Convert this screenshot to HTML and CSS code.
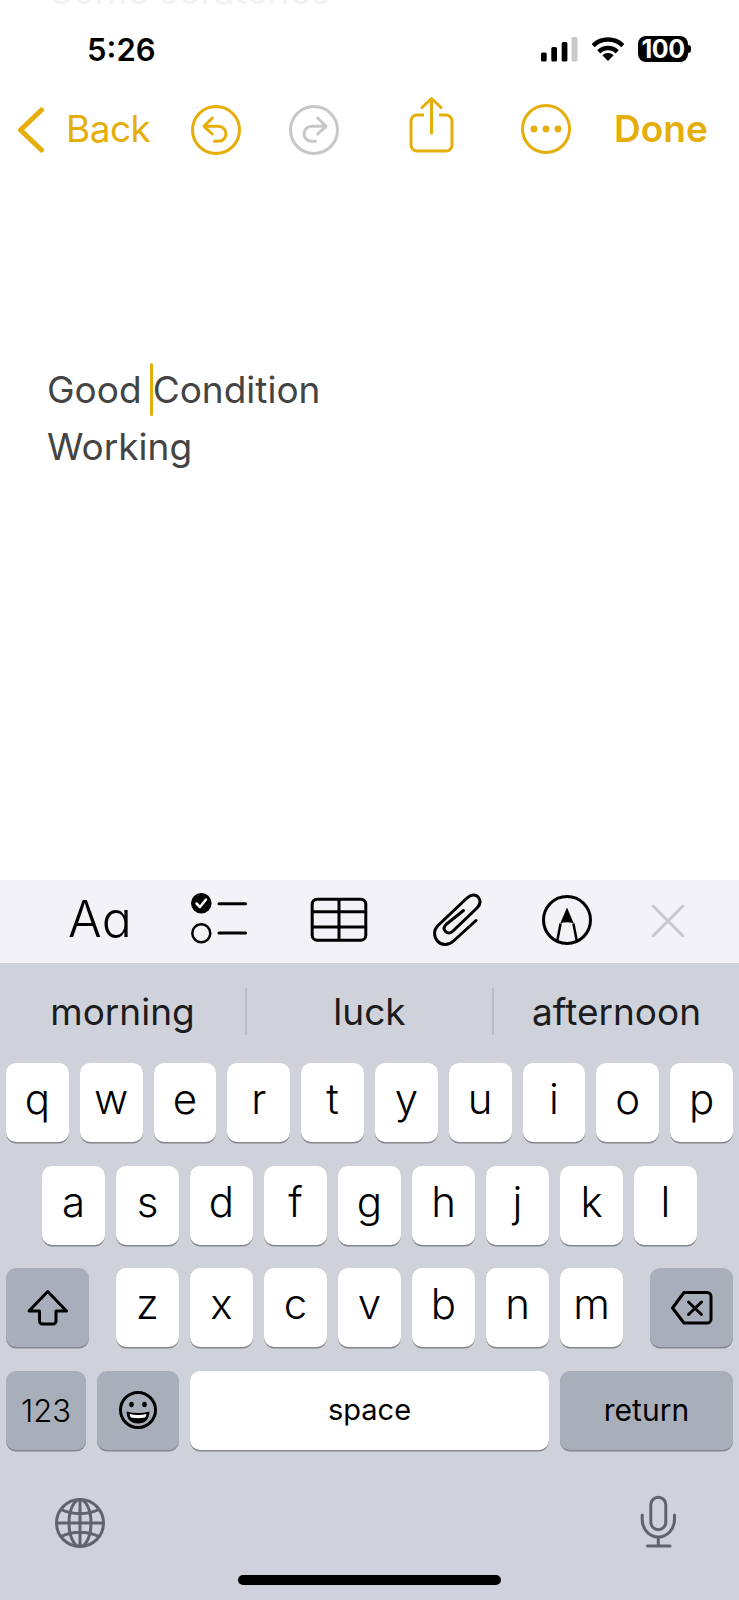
FILE: index.html
```html
<!DOCTYPE html>
<html lang="en">
<head>
    <meta charset="UTF-8">
    <meta name="viewport" content="width=device-width, initial-scale=1.0">
    <title>Note</title>
    <link rel="stylesheet" href="styles.css">
</head>
<body>
<div class="page">
    <div class="note-area">
        <p class="ghost-line">Some scratches</p>

        <div class="status-bar">
            <span class="time">5:26</span>
            <svg class="signal" width="37" height="25" viewBox="0 0 37 25">
                <rect x="0" y="15.5" width="5.7" height="9" rx="1.5" fill="#000"/>
                <rect x="10.3" y="10" width="5.7" height="14.5" rx="1.5" fill="#000"/>
                <rect x="20.7" y="5" width="5.7" height="19.5" rx="1.5" fill="#000"/>
                <rect x="30.5" y="0" width="6" height="24.5" rx="1.5" fill="#c9c9c9"/>
            </svg>
            <svg class="wifi" width="32" height="24" viewBox="0 0 32 24">
                <path d="M1.15 8.65A21 21 0 0 1 30.85 8.65M6.8 14.8A13 13 0 0 1 25.2 14.8" fill="none" stroke="#000" stroke-width="4.5"/>
                <path d="M16 24L10.34 18.34A8 8 0 0 1 21.66 18.34Z" fill="#000"/>
            </svg>
            <span class="battery">100</span>
        </div>

        <div class="nav-bar">
            <svg class="back-chevron" width="28" height="46" viewBox="0 0 28 46">
                <path d="M24.5 3L3.5 23L24.5 43" fill="none" stroke="#e6ae0a" stroke-width="5" stroke-linecap="round" stroke-linejoin="round"/>
            </svg>
            <span class="back-label">Back</span>
            <svg class="undo-icon" width="52" height="52" viewBox="0 0 52 52">
                <circle cx="26" cy="26" r="23.5" fill="none" stroke="#e6ae0a" stroke-width="3"/>
                <path d="M22.3 14L14 22.3L22.3 30M14 22.3H28.5A7.5 7.5 0 0 1 28.5 37.3H24.5" fill="none" stroke="#e6ae0a" stroke-width="3" stroke-linecap="round" stroke-linejoin="round"/>
            </svg>
            <svg class="redo-icon" width="52" height="52" viewBox="0 0 52 52">
                <circle cx="26" cy="26" r="23.5" fill="none" stroke="#c7c7c9" stroke-width="3"/>
                <path d="M29.7 14L38 22.3L29.7 30M38 22.3H23.5A7.5 7.5 0 0 0 23.5 37.3H27.5" fill="none" stroke="#c7c7c9" stroke-width="3" stroke-linecap="round" stroke-linejoin="round"/>
            </svg>
            <svg class="share-icon" width="47" height="58" viewBox="0 0 47 58">
                <path d="M16 19H9A6 6 0 0 0 3 25V49A6 6 0 0 0 9 55H38A6 6 0 0 0 44 49V25A6 6 0 0 0 38 19H31" fill="none" stroke="#e6ae0a" stroke-width="3"/>
                <path d="M23.5 37V3M14 11.5L23.5 2.5L33 11.5" fill="none" stroke="#e6ae0a" stroke-width="3" stroke-linecap="round" stroke-linejoin="round"/>
            </svg>
            <svg class="more-icon" width="52" height="52" viewBox="0 0 52 52">
                <circle cx="26" cy="26" r="23.5" fill="none" stroke="#e6ae0a" stroke-width="3"/>
                <circle cx="14" cy="26" r="3.4" fill="#e6ae0a"/>
                <circle cx="26" cy="26" r="3.4" fill="#e6ae0a"/>
                <circle cx="38" cy="26" r="3.4" fill="#e6ae0a"/>
            </svg>
            <span class="done-label">Done</span>
        </div>

        <div class="note-body">
            <p>Good<span class="caret"></span>Condition</p>
            <p>Working</p>
        </div>
    </div>

    <div class="format-bar">
        <span class="format-aa">Aɑ</span>
        <svg class="format-list" width="58" height="52" viewBox="0 0 58 52">
            <circle cx="11.3" cy="11.3" r="10.3" fill="#000"/>
            <path d="M6.5 11.5L10 15L16 7.5" fill="none" stroke="#fff" stroke-width="2.5" stroke-linecap="round" stroke-linejoin="round"/>
            <circle cx="11.3" cy="41.3" r="9" fill="none" stroke="#000" stroke-width="2.5"/>
            <path d="M29 11.7H55.5M29 41H55.5" stroke="#000" stroke-width="3" stroke-linecap="round"/>
        </svg>
        <svg class="format-table" width="60" height="48" viewBox="0 0 60 48">
            <rect x="3.2" y="3.2" width="53.6" height="41" rx="5" fill="none" stroke="#000" stroke-width="3"/>
            <path d="M3 15.7H57M3 31H57M30 3V44" stroke="#000" stroke-width="3"/>
        </svg>
        <svg class="format-clip" width="52" height="58" viewBox="0 0 52 58">
            <path d="M45 30.5L22.5 51C17 56 10 55.5 6.5 51C2.5 46.5 2.5 40 7 35.5L36 8C40 4 45 4 47.5 7.5C50 11 49 15 46 18L22 41C19.5 43.5 16.5 43.5 14.5 41.5C12.5 39.5 12.5 37 15 34.5L32.5 20.5" fill="none" stroke="#000" stroke-width="3" stroke-linecap="round" stroke-linejoin="round"/>
        </svg>
        <svg class="format-markup" width="52" height="52" viewBox="0 0 52 52">
            <circle cx="26" cy="26" r="23.5" fill="none" stroke="#000" stroke-width="3"/>
            <path d="M26 13.5L32.8 29.5Q26 27 19.2 29.5Z" fill="#000"/>
            <path d="M19.6 29.5L16 48M32.4 29.5L36 48" fill="none" stroke="#000" stroke-width="2.5"/>
        </svg>
        <svg class="format-close" width="34" height="34" viewBox="0 0 34 34">
            <path d="M2 2L32 32M32 2L2 32" stroke="#c7c7cc" stroke-width="2.8" stroke-linecap="round"/>
        </svg>
    </div>

    <div class="keyboard">
        <div class="suggestions">
            <span class="suggestion">morning</span>
            <span class="suggestion">luck</span>
            <span class="suggestion">afternoon</span>
        </div>

        <div class="key-row">
            <span class="key">q</span><span class="key">w</span><span class="key">e</span><span class="key">r</span><span class="key">t</span><span class="key">y</span><span class="key">u</span><span class="key">i</span><span class="key">o</span><span class="key">p</span>
        </div>
        <div class="key-row key-row-home">
            <span class="key">a</span><span class="key">s</span><span class="key">d</span><span class="key">f</span><span class="key">g</span><span class="key">h</span><span class="key">j</span><span class="key">k</span><span class="key">l</span>
        </div>
        <div class="key-row key-row-shift">
            <span class="key key-dark key-shift">
                <svg width="44" height="40" viewBox="0 0 44 40">
                    <path d="M21.7 3.5L3 23H13.5V33A3 3 0 0 0 16.5 36H27A3 3 0 0 0 30 33V23H40.5Z" fill="none" stroke="#000" stroke-width="3" stroke-linejoin="round"/>
                </svg>
            </span>
            <span class="key">z</span><span class="key">x</span><span class="key">c</span><span class="key">v</span><span class="key">b</span><span class="key">n</span><span class="key">m</span>
            <span class="key key-dark key-shift">
                <svg width="44" height="36" viewBox="0 0 44 36">
                    <path d="M14 2.5H37A4 4 0 0 1 41 6.5V29A4 4 0 0 1 37 33H14L2.5 18Z" fill="none" stroke="#000" stroke-width="3" stroke-linejoin="round"/>
                    <path d="M18.5 12L31.5 24.5M31.5 12L18.5 24.5" stroke="#000" stroke-width="3" stroke-linecap="round"/>
                </svg>
            </span>
        </div>
        <div class="key-row">
            <span class="key key-dark key-123">123</span>
            <span class="key key-dark key-emoji">
                <svg width="40" height="40" viewBox="0 0 40 40">
                    <circle cx="20" cy="20" r="17.5" fill="none" stroke="#000" stroke-width="3"/>
                    <ellipse cx="13.5" cy="14.5" rx="2.3" ry="2.8" fill="#000"/>
                    <ellipse cx="26.5" cy="14.5" rx="2.3" ry="2.8" fill="#000"/>
                    <path d="M8.5 21.5Q20 24.5 31.5 21.5Q31 33.5 20 33.5Q9 33.5 8.5 21.5Z" fill="#000"/>
                    <path d="M11.5 24Q20 26 28.5 24Q28 27 27 27.5Q20 29 13 27.5Q12 27 11.5 24Z" fill="#fff"/>
                </svg>
            </span>
            <span class="key key-space">space</span>
            <span class="key key-dark key-return">return</span>
        </div>

        <div class="keyboard-bottom">
            <svg width="52" height="52" viewBox="0 0 52 52">
                <circle cx="26" cy="26" r="23.5" fill="none" stroke="#5f636c" stroke-width="3"/>
                <ellipse cx="26" cy="26" rx="11" ry="23.5" fill="none" stroke="#5f636c" stroke-width="3"/>
                <path d="M26 2.5V49.5M2.5 26H49.5M7 12.5Q26 21 45 12.5M7 39.5Q26 31 45 39.5" fill="none" stroke="#5f636c" stroke-width="3"/>
            </svg>
            <svg class="mic-icon" width="42" height="56" viewBox="0 0 42 56">
                <rect x="12.8" y="4.2" width="15" height="32.5" rx="7.5" fill="none" stroke="#5f636c" stroke-width="3"/>
                <path d="M4.2 22V26C4.2 36 11 44 20.3 44C29.5 44 36.5 36 36.5 26V22M20.3 44V53M9.5 53H32" fill="none" stroke="#5f636c" stroke-width="3" stroke-linecap="round"/>
            </svg>
        </div>
        <div class="home-bar"></div>
    </div>
</div>
</body>
</html>
```

FILE: styles.css
```css
:root {
    --gold: #e6ae0a;
    --kb-bg: #cfd2da;
    --key-dark: #a9afba;
}

body {
    margin: 0;
    font-family: Inter, 'Noto Sans', sans-serif;
    background-color: #fff;
}

.page {
    width: 739px;
    height: 1600px;
    overflow: hidden;
    display: flex;
    flex-direction: column;
}

.note-area {
    height: 880px;
    flex: none;
    background-color: #fff;
}

.ghost-line {
    margin: -31px 0 0 49px;
    font-size: 37px;
    line-height: 44px;
    color: #f2f2f2;
}

.status-bar {
    height: 79px;
    padding-bottom: 7px;
    box-sizing: border-box;
    display: flex;
    align-items: center;
}

.time {
    margin-left: 87px;
    font-size: 31px;
    font-weight: 600;
    color: #000;
    width: 454px;
}

.wifi {
    margin-left: 14px;
}

.battery {
    margin-left: 14px;
    width: 50px;
    height: 26px;
    border-radius: 8px;
    background-color: #000;
    color: #fff;
    font-size: 25px;
    font-weight: 700;
    line-height: 26px;
    letter-spacing: -0.5px;
    text-align: center;
    position: relative;
}

.battery::after {
    content: "";
    position: absolute;
    left: 50px;
    top: 9px;
    width: 3px;
    height: 8px;
    border-radius: 0 3px 3px 0;
    background-color: #000;
}

.nav-bar {
    height: 76px;
    display: flex;
    align-items: center;
    color: var(--gold);
    font-size: 37px;
}

.back-chevron {
    margin-left: 17px;
}

.back-label {
    margin-left: 21px;
    margin-bottom: 4px;
    width: 124px;
    letter-spacing: -0.5px;
}

.redo-icon {
    margin-left: 46px;
}

.share-icon {
    margin-left: 68px;
    margin-bottom: 10px;
}

.more-icon {
    margin-left: 65px;
    margin-bottom: 2px;
}

.done-label {
    margin-left: 42px;
    margin-bottom: 4px;
    font-weight: 600;
}

.note-body {
    margin: 193px 0 0 47px;
    font-size: 37px;
    line-height: 57px;
    color: #444;
}

.note-body p {
    margin: 0;
}

.caret {
    display: inline-block;
    width: 3px;
    height: 53px;
    margin: 0 0 0 8px;
    vertical-align: -13px;
    border-radius: 2px;
    background-color: var(--gold);
}

.format-bar {
    height: 83px;
    flex: none;
    display: flex;
    align-items: center;
    background-color: #f2f2f7;
}

.format-aa {
    margin-left: 68px;
    margin-bottom: 5px;
    width: 122px;
    font-size: 50px;
    font-weight: 300;
    color: #000;
}

.format-list {
    margin-bottom: 7px;
}

.format-table {
    margin-left: 61px;
    margin-bottom: 3px;
}

.format-clip {
    margin-left: 62px;
    margin-bottom: 5px;
}

.format-markup {
    margin-left: 58px;
    margin-bottom: 4px;
}

.format-close {
    margin-left: 58px;
    margin-bottom: 2px;
}

.keyboard {
    flex: 1;
    padding: 0 6px;
    background-color: var(--kb-bg);
}

.suggestions {
    height: 100px;
    margin: 0 -6px;
    padding-bottom: 4px;
    box-sizing: border-box;
    display: flex;
    align-items: center;
}

.suggestion {
    flex: 1;
    height: 47px;
    line-height: 47px;
    text-align: center;
    font-size: 37px;
    color: #1c1c1e;
    border-left: 2px solid #b9bcc4;
}

.suggestion:first-child {
    border-left: none;
}

.key-row {
    display: flex;
    gap: 11px;
    margin-bottom: 23.5px;
}

.key-row-home {
    padding: 0 36px;
}

.key {
    flex: 1;
    height: 79px;
    padding-bottom: 8px;
    box-sizing: border-box;
    display: flex;
    align-items: center;
    justify-content: center;
    border-radius: 10px;
    background-color: #fff;
    box-shadow: 0 1.5px 0 #85878c;
    font-size: 42px;
    font-weight: 300;
    color: #000;
}

.key-dark {
    background-color: var(--key-dark);
}

.key-shift {
    flex: none;
    width: 83px;
    padding-bottom: 0;
}

.key-shift:first-child {
    margin-right: 16px;
}

.key-shift:last-child {
    margin-left: 16px;
}

.key-123 {
    flex: none;
    width: 80px;
    padding-bottom: 0;
    font-size: 31px;
}

.key-emoji {
    flex: none;
    width: 82px;
    padding-bottom: 0;
}

.key-space {
    flex: none;
    width: 359px;
    padding-bottom: 2px;
    font-size: 29px;
    font-weight: 400;
}

.key-return {
    flex: none;
    width: 173px;
    padding-bottom: 0;
    font-size: 30px;
    font-weight: 400;
}

.keyboard-bottom {
    display: flex;
    justify-content: space-between;
    align-items: center;
    margin-top: 43.5px;
    padding: 0 53px 0 48px;
}

.mic-icon {
    margin-bottom: 4px;
}

.home-bar {
    width: 263px;
    height: 10px;
    margin: 21.5px auto 0;
    border-radius: 5px;
    background-color: #000;
}
```
